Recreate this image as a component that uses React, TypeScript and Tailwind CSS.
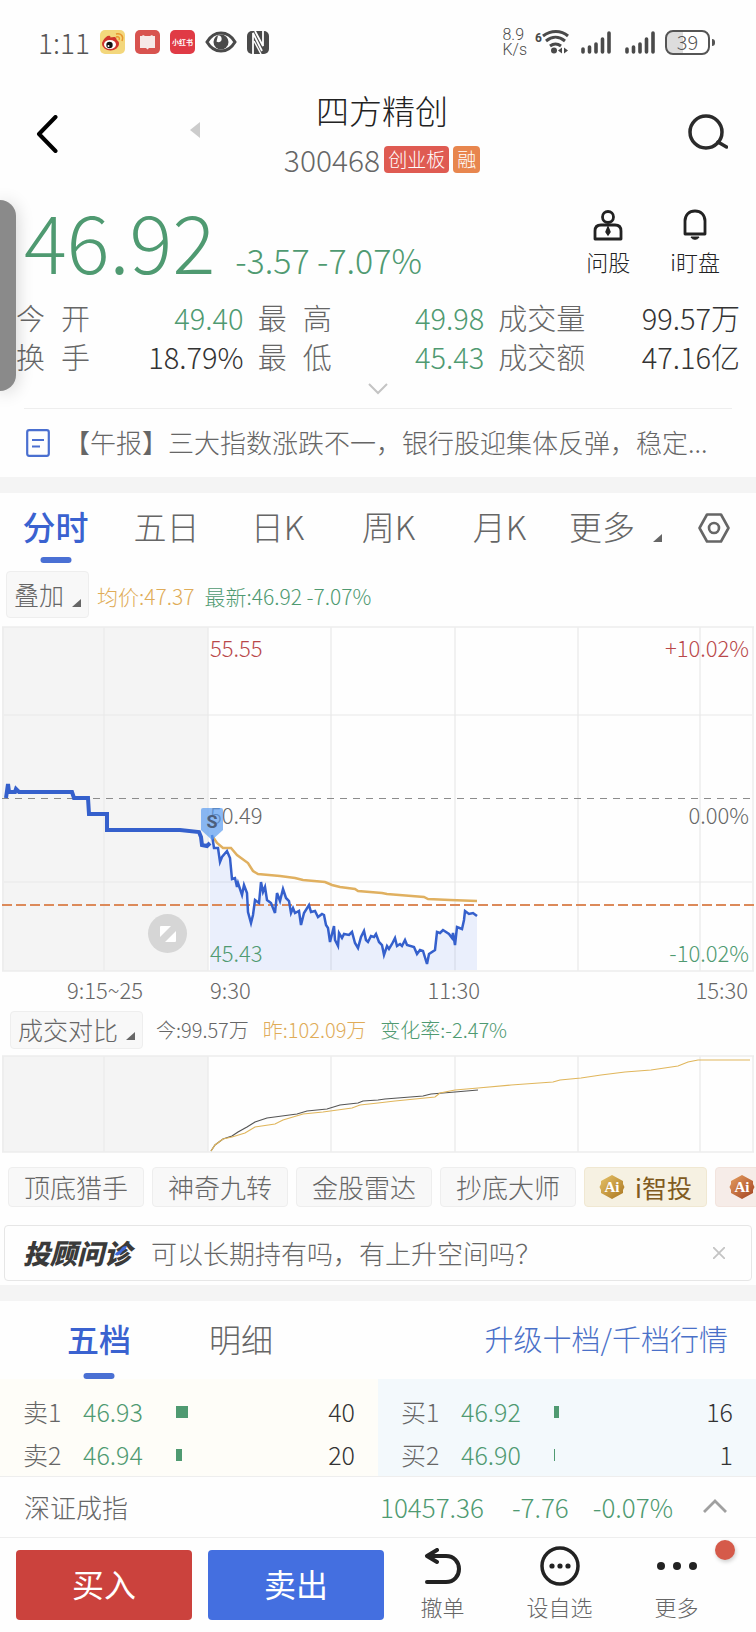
import type { ReactNode } from "react";

const STATS = [
  [
    { label: "今 开", value: "49.40", tone: "text-[#4f9a71]" },
    { label: "最 高", value: "49.98", tone: "text-[#4f9a71]" },
    { label: "成交量", value: "99.57万", tone: "text-[#333333]" },
  ],
  [
    { label: "换 手", value: "18.79%", tone: "text-[#333333]" },
    { label: "最 低", value: "45.43", tone: "text-[#4f9a71]" },
    { label: "成交额", value: "47.16亿", tone: "text-[#333333]" },
  ],
];

const PERIODS = [
  { label: "分时", active: true },
  { label: "五日" },
  { label: "日K" },
  { label: "周K" },
  { label: "月K" },
];

const TOOLS = ["顶底猎手", "神奇九转", "金股雷达", "抄底大师"];

const ASKS = [
  { label: "卖1", price: "46.93", volume: 40 },
  { label: "卖2", price: "46.94", volume: 20 },
];

const BIDS = [
  { label: "买1", price: "46.92", volume: 16 },
  { label: "买2", price: "46.90", volume: 1 },
];

const GRID_X = [3, 104, 208, 331, 455, 578, 700, 753];

const AUCTION =
  "6,172 8,158 9,166 15,166 16,163 19,166 72,166 74,172 88,172 89,188 107,188 107,204 180,204 199,206 201,211 202,219 207,220 210,217";

const PRICE =
  "212,209 214,222 218,222 220,236 222,231 227,225 230,232 232,253 235,252 237,261 238,257 242,269 244,259 247,267 248,286 251,297 253,289 255,274 259,277 261,256 263,266 265,261 267,274 271,277 275,287 277,267 280,275 283,263 286,272 289,275 291,287 293,282 295,287 299,285 301,299 304,287 309,279 311,286 315,285 318,291 322,288 324,289 326,299 328,302 330,316 334,300 335,314 338,320 339,307 342,312 344,308 349,309 352,306 355,317 358,322 361,311 364,305 366,314 368,316 371,310 374,311 376,308 379,316 382,319 384,329 387,320 389,323 392,318 395,312 397,320 400,318 402,320 405,314 407,319 414,321 417,328 420,324 423,325 427,338 429,328 435,324 437,306 440,307 443,304 449,308 452,312 453,307 455,319 457,301 462,303 464,294 465,285 469,288 473,287 477,290";

const AVERAGE =
  "213,211 217,217 223,222 231,222 237,229 248,237 253,245 258,248 280,250 295,252 303,254 325,256 332,259 340,261 355,263 358,265 382,267 387,268 424,271 428,273 450,274 477,275";

const VOLUME_YESTERDAY =
  "211,96 215,90 223,84 232,82 245,78 255,72 275,69 283,65 293,62 303,59 323,57 352,53 360,50 378,48 395,46 435,42 440,38 455,35 478,33 511,30 553,27 560,25 581,23 601,20 625,17 651,15 678,11 688,7 698,5 750,5";

const VOLUME_TODAY =
  "211,96 215,90 223,84 232,81 238,77 247,72 255,67 267,63 297,59 307,56 327,54 340,50 358,48 363,46 378,45 385,44 423,41 431,39 455,37 478,35";

function Corner() {
  return (
    <svg viewBox="0 0 9 8" className="h-2 w-[9px]" fill="#666666" aria-hidden="true">
      <path d="M9 0v8H0z" />
    </svg>
  );
}

function Signal() {
  return (
    <svg viewBox="0 0 30 23" className="h-[23px] w-[30px]" stroke="#4a4a4a" strokeWidth="3.6" strokeLinecap="round" aria-hidden="true">
      <path d="M2 18v3M8.500 16v5M15 13v8M21.500 8v13M28 2v19" />
    </svg>
  );
}

function AiBadge({ from, to, id }: { from: string; to: string; id: string }) {
  return (
    <svg viewBox="0 0 26 26" className="size-[26px] shrink-0" aria-hidden="true">
      <defs>
        <linearGradient id={id} x1="0" y1="0" x2="1" y2="1">
          <stop offset="0" stopColor={from} />
          <stop offset="1" stopColor={to} />
        </linearGradient>
      </defs>
      <path d="M13 1 24 7v3l1.500 3-1.500 3v3l-11 6-11-6v-3L.5 13 2 10V7z" fill={`url(#${id})`} />
      <text x="13" y="18" textAnchor="middle" fontSize="15" fontWeight="700" fontFamily="Liberation Serif, serif" fill="#ffffff">Ai</text>
    </svg>
  );
}

function StatusBar() {
  return (
    <div className="flex h-[84px] items-center justify-between pr-[41px] pl-[38px]">
      <div className="flex items-center gap-[10px]">
        <span className="text-[28px] text-[#555555]">1:11</span>
        <svg viewBox="0 0 25 24" className="h-6 w-[25px]" aria-hidden="true">
          <rect width="25" height="24" rx="5" fill="#f3d77c" />
          <ellipse cx="10.500" cy="14" rx="8.500" ry="6.500" fill="#d0342c" />
          <path d="M3 11c2-4 5-6 7-5 1 1 0 2 0 2s5-2 6 0c1 1 0 2 0 2z" fill="#d0342c" />
          <ellipse cx="10" cy="14.500" rx="6" ry="4.500" fill="#ffffff" />
          <circle cx="9.500" cy="15" r="3.200" fill="#111111" />
          <circle cx="8.500" cy="16" r="1" fill="#ffffff" />
          <path d="M16 7c3-1 4 1 3 3M16 4c5-1 8 2 6 7" fill="none" stroke="#e8962c" strokeWidth="1.500" />
        </svg>
        <svg viewBox="0 0 25 24" className="h-6 w-[25px]" aria-hidden="true">
          <rect width="25" height="24" rx="5" fill="#d8534f" />
          <path d="M5 6h2l1-1 2 1h5l2-1 1 1h2v12h-6l-1.500 1.500L11 18H5z" fill="#f6e9e8" />
        </svg>
        <span className="flex h-6 w-[25px] items-center justify-center rounded-[5px] bg-[#e03a45] text-[7px] font-bold whitespace-nowrap text-white">小红书</span>
        <svg viewBox="0 0 32 22" className="h-[22px] w-8" aria-hidden="true">
          <path d="M2 11C9-1 23-1 30 11 23 23 9 23 2 11z" fill="none" stroke="#4a4a4a" strokeWidth="3" />
          <circle cx="16" cy="11" r="7.500" fill="#4a4a4a" />
          <path d="M13 4.500c3 0 4 2 3.500 4.500-.5 2-3 3-5 1.500z" fill="#ffffff" />
        </svg>
        <svg viewBox="0 0 22 23" className="h-[23px] w-[22px]" aria-hidden="true">
          <rect width="22" height="23" rx="5" fill="#4a4a4a" />
          <path d="M6 23V2l9 18M8 0l8 15V0" fill="none" stroke="#ffffff" strokeWidth="1.800" />
          <path d="m7 10 7 13" fill="none" stroke="#ffffff" strokeWidth="1.500" />
        </svg>
      </div>
      <div className="flex items-center">
        <div className="font-[Roboto,sans-serif] text-[16px] leading-[15px] text-[#4a4a4a]">
          8.9
          <br />
          K/s
        </div>
        <svg viewBox="0 0 36 26" className="ml-2 h-[26px] w-9" aria-hidden="true">
          <text x="0" y="13" fontSize="12" fontWeight="700" fontFamily="Roboto, sans-serif" fill="#4a4a4a">6</text>
          <path d="M8 7c8-6 18-6 25 0M11 12c6-5 13-5 19 0M15 17c4-3 7-3 11 0" fill="none" stroke="#4a4a4a" strokeWidth="3" />
          <circle cx="19" cy="21.500" r="3" fill="#4a4a4a" />
          <path d="m23 21.500 4-3v6zM33 21.500l-4-3v6z" fill="#4a4a4a" />
        </svg>
        <span className="ml-[10px]">
          <Signal />
        </span>
        <span className="ml-[14px]">
          <Signal />
        </span>
        <span className="ml-[10px] flex h-[25px] w-[45px] items-center justify-center rounded-[8px] border-2 border-[#555555] bg-linear-to-r from-[#dddddd] from-40% to-white to-40% text-[20px] text-[#555555]">39</span>
        <span className="ml-[2px] h-[7px] w-[3px] rounded-r-sm bg-[#555555]" />
      </div>
    </div>
  );
}

function Header() {
  return (
    <header className="flex h-[100px] items-center justify-between pr-[28px] pl-[36px]">
      <div className="flex flex-1 items-center">
        <button type="button" aria-label="返回">
          <svg viewBox="0 0 22 38" className="h-[38px] w-[22px]" fill="none" stroke="#000000" strokeWidth="4" strokeLinecap="round" strokeLinejoin="round">
            <path d="M19.500 2 3 19l16.500 17" />
          </svg>
        </button>
        <button type="button" aria-label="上一只" className="mb-2 ml-[132px]">
          <svg viewBox="0 0 10 16" className="h-4 w-[10px]" fill="#cccccc">
            <path d="M10 0v16L0 8z" />
          </svg>
        </button>
      </div>
      <div className="flex flex-col items-center">
        <h1 className="text-[33px] leading-[50px] font-light text-[#222222]">四方精创</h1>
        <div className="flex h-12 items-center gap-1">
          <span className="text-[30px] text-[#666666]">300468</span>
          <span className="flex h-[27px] items-center rounded-[4px] bg-[#df5b52] px-[4px] text-[19px] text-white">创业板</span>
          <span className="flex h-[27px] items-center rounded-[4px] bg-[#e8864e] px-[4px] text-[19px] text-white">融</span>
        </div>
      </div>
      <div className="flex flex-1 justify-end pb-1">
        <button type="button" aria-label="搜索">
          <svg viewBox="0 0 40 36" className="h-9 w-10" fill="none" stroke="#2b2b2b" strokeWidth="3.500">
            <circle cx="18" cy="18" r="16" />
            <path d="m30 28 8.500 5" strokeLinecap="round" />
          </svg>
        </button>
      </div>
    </header>
  );
}

function Quote() {
  return (
    <section className="flex h-[114px] justify-between pr-[36px] pl-6">
      <div className="flex items-baseline gap-5 text-[#4f9a71]">
        <strong className="text-[80px] leading-[110px] font-light">46.92</strong>
        <span className="text-[34px]">-3.57 -7.07%</span>
      </div>
      <div className="flex gap-[40px] pt-[25px] text-[22px] leading-[40px] text-[#222222]">
        <button type="button" className="flex flex-col items-center">
          <svg viewBox="0 0 30 32" className="h-8 w-[30px]" fill="none" stroke="#222222" strokeWidth="2.800" aria-hidden="true">
            <circle cx="15" cy="8" r="5.500" />
            <path d="M2 30v-8c0-4 2-6 6-6h14c4 0 6 2 6 6v8z" strokeLinejoin="round" />
            <path d="m15 18 2 5-2 3-2-3z" fill="#222222" strokeWidth="1.500" />
          </svg>
          问股
        </button>
        <button type="button" className="flex flex-col items-center">
          <svg viewBox="0 0 24 32" className="h-8 w-6" fill="none" stroke="#222222" strokeWidth="2.800" aria-hidden="true">
            <path d="M2 25V12C2 6 6 2 12 2s10 4 10 10v13z" strokeLinejoin="round" />
            <path d="M8 28h8c-1 3-7 3-8 0z" fill="#222222" strokeWidth="1" />
          </svg>
          i盯盘
        </button>
      </div>
    </section>
  );
}

function Stats() {
  return (
    <section className="-mt-[2px]">
      {STATS.map((row) => (
        <dl key={row[0].label} className="grid h-[39px] grid-cols-[227fr_226fr_241fr] items-center gap-x-[14px] pr-[16px] pl-[16px] text-[29px]">
          {row.map((item) => (
            <div key={item.label} className="flex justify-between">
              <dt className={item.label[1] === " " ? "flex w-[74px] justify-between text-[#666666]" : "text-[#666666]"}>
                {item.label[1] === " " ? (
                  <>
                    <span>{item.label[0]}</span>
                    <span>{item.label[2]}</span>
                  </>
                ) : (
                  item.label
                )}
              </dt>
              <dd className={item.tone}>{item.value}</dd>
            </div>
          ))}
        </dl>
      ))}
      <button type="button" aria-label="展开" className="flex h-[34px] w-full items-center justify-center pb-1">
        <svg viewBox="0 0 20 12" className="h-3 w-5" fill="none" stroke="#c4c4c4" strokeWidth="2">
          <path d="m1 1 9 9 9-9" />
        </svg>
      </button>
    </section>
  );
}

function News() {
  return (
    <a href="#news" className="mx-6 flex h-[69px] items-center border-t border-[#eeeeee] pl-[2px]">
      <svg viewBox="0 0 24 28" className="h-7 w-6 shrink-0" fill="none" stroke="#4a6fd0" strokeWidth="2.200" aria-hidden="true">
        <rect x="1.200" y="1.200" width="21.600" height="25.600" rx="2" />
        <path d="M6 11h12M6 17.500h8" />
      </svg>
      <span className="ml-[14px] flex-1 truncate pr-[10px] pb-1 text-[26px] text-[#666666]">【午报】三大指数涨跌不一，银行股迎集体反弹，稳定...</span>
    </a>
  );
}

function PeriodTabs() {
  return (
    <nav className="flex h-[70px] pr-[26px] text-[33px] leading-[66px] text-[#666666]">
      {PERIODS.map((tab) => (
        <button key={tab.label} type="button" className={tab.active ? "relative h-full w-[111px] pb-1 font-medium text-[#3a62d0]" : "h-full w-[111px] pb-1"}>
          {tab.label}
          {tab.active ? <span className="absolute bottom-0 left-1/2 h-[6px] w-[31px] -translate-x-1/2 rounded-full bg-[#4a70d4]" /> : null}
        </button>
      ))}
      <button type="button" className="ml-[14px] flex h-full items-center gap-[18px] pb-1">
        更多
        <span className="mt-6">
          <Corner />
        </span>
      </button>
      <button type="button" aria-label="设置" className="ml-auto">
        <svg viewBox="0 0 32 30" className="h-[30px] w-8" fill="none" stroke="#666666" strokeWidth="2.600">
          <path d="M9 1.500h14L30.500 15 23 28.500H9L1.500 15z" strokeLinejoin="round" />
          <circle cx="16" cy="15" r="5" />
        </svg>
      </button>
    </nav>
  );
}

function Grid({ height, edges, rows }: { height: number; edges: number[]; rows: number[] }) {
  return (
    <>
      <rect x="2" y="1" width="206" height={height - 2} fill="#f4f4f4" />
      <g stroke="#ececec" strokeWidth="1.500">
        {GRID_X.map((x) => (
          <path key={x} d={`M${x} 1V${height - 1}`} />
        ))}
        {edges.map((y) => (
          <path key={y} d={`M2 ${y}H754`} />
        ))}
      </g>
      <g stroke="#e8e8e8" strokeWidth="1">
        {rows.map((y) => (
          <path key={y} d={`M4 ${y}H752`} />
        ))}
      </g>
    </>
  );
}

function PriceChart() {
  return (
    <section className="mt-2">
      <div className="relative h-[346px] text-[22px] leading-[24px]">
        <svg viewBox="0 0 756 346" preserveAspectRatio="none" className="h-full w-full" fill="none">
          <Grid height={346} edges={[1, 345]} rows={[89, 256]} />
          <polygon points={`${PRICE} 477,344 210,344 210,212`} fill="#4a78f0" fillOpacity="0.110" />
          <path d="M2 172.500H754" stroke="#8c8c8c" strokeWidth="1" strokeDasharray="7 6" />
          <path d="M2 279H756" stroke="#dc8a5a" strokeWidth="2" strokeDasharray="10 4" />
          <polyline points={AUCTION} stroke="#3560cc" strokeWidth="4" />
          <polyline points={AVERAGE} stroke="#e0b060" strokeWidth="2.500" />
          <polyline points={PRICE} stroke="#3560cc" strokeWidth="2.500" />
        </svg>
        <span className="absolute top-[9px] left-[210px] text-[#b9484a]">55.55</span>
        <span className="absolute top-[9px] right-[7px] text-[#b9484a]">+10.02%</span>
        <span className="absolute top-[176px] left-[210px] text-[#666666]">50.49</span>
        <span className="absolute top-[176px] right-[7px] text-[#666666]">0.00%</span>
        <span className="absolute top-[314px] left-[210px] text-[#4f9a71]">45.43</span>
        <span className="absolute top-[314px] right-[7px] text-[#4f9a71]">-10.02%</span>
        <svg viewBox="0 0 22 32" className="absolute top-[182px] left-[201px] h-8 w-[22px]" aria-hidden="true">
          <path d="M0 2q0-2 2-2h18q2 0 2 2v20L11 32 0 22z" fill="#5a9bf0" fillOpacity="0.700" />
          <text x="11" y="20" textAnchor="middle" fontSize="18" fontWeight="700" fontFamily="Roboto, sans-serif" fill="#4d5f7c">S</text>
        </svg>
        <button type="button" aria-label="全屏" className="absolute top-[288px] left-[148px] flex size-[39px] items-center justify-center rounded-full bg-[#d6d6d6]">
          <svg viewBox="0 0 16 16" className="size-4" fill="#ffffff">
            <path d="M0 1q0-1 1-1h10L0 11zM16 15q0 1-1 1H5L16 5z" />
          </svg>
        </button>
      </div>
      <div className="grid h-9 grid-cols-[210fr_270fr_276fr] items-center pb-[2px] text-[22px] text-[#666666]">
        <span className="text-center">9:15~25</span>
        <span className="flex justify-between">
          <span>9:30</span>
          <span>11:30</span>
        </span>
        <span className="pr-2 text-right">15:30</span>
      </div>
    </section>
  );
}

function VolumeChart() {
  return (
    <section>
      <div className="mt-[3px] flex h-[38px] items-center pl-[10px] text-[20px]">
        <button type="button" className="flex h-full items-center gap-2 rounded-[4px] border border-[#eeeeee] bg-[#f8f8f8] px-[7px] text-[25px] text-[#666666]">
          成交对比
          <span className="mt-3">
            <Corner />
          </span>
        </button>
        <span className="ml-[13px] text-[#666666]">今:99.57万</span>
        <span className="ml-[14px] text-[#e0ac58]">昨:102.09万</span>
        <span className="ml-[14px] text-[#4f9a71]">变化率:-2.47%</span>
      </div>
      <svg viewBox="0 0 756 98" preserveAspectRatio="none" className="mt-[6px] h-[98px] w-full" fill="none">
        <Grid height={98} edges={[1, 97]} rows={[]} />
        <polyline points={VOLUME_TODAY} stroke="#555555" strokeWidth="1.200" />
        <polyline points={VOLUME_YESTERDAY} stroke="#e0b65c" strokeWidth="1.200" />
      </svg>
    </section>
  );
}

function Tools() {
  return (
    <div className="mt-[14px] flex gap-2 overflow-hidden pl-2 text-[26px] whitespace-nowrap text-[#666666]">
      {TOOLS.map((tool) => (
        <button key={tool} type="button" className="h-10 w-[136px] shrink-0 rounded-[4px] border border-[#eeeeee] bg-[#f8f8f8] leading-[36px]">
          {tool}
        </button>
      ))}
      <button type="button" className="flex h-10 w-[123px] shrink-0 items-center justify-center gap-[10px] rounded-[4px] border border-[#f0e8d2] bg-[#f6f1e2] text-[25px] leading-[36px] font-normal text-[#805a20]">
        <AiBadge id="ai-gold" from="#e8c468" to="#a87420" />
        i智投
      </button>
      <button type="button" aria-label="Ai" className="flex h-10 w-[123px] shrink-0 items-center rounded-[4px] border border-[#f2e4de] bg-[#f6ece8] pl-[13px]">
        <AiBadge id="ai-copper" from="#e8a060" to="#a04020" />
      </button>
    </div>
  );
}

function AdvisorBar() {
  return (
    <div className="mx-1 mt-[18px] flex h-14 items-center rounded-[4px] border border-[#e6e6e6] pr-[26px] pl-[18px]">
      <span className="relative text-[27px] font-black text-[#3a3a3a] italic">
        投顾问诊
        <svg viewBox="0 0 12 10" className="absolute top-[13px] right-[4px] h-[10px] w-3" fill="#3f68d8" aria-hidden="true">
          <path d="M0 9c1-4 4-3 6-6 1-2 3-3 6-3-1 4-3 4-5 6C5 9 3 10 0 9z" />
        </svg>
      </span>
      <a href="#ask" className="ml-5 flex-1 pb-[2px] text-[26px] text-[#666666]">可以长期持有吗，有上升空间吗？</a>
      <button type="button" aria-label="关闭">
        <svg viewBox="0 0 12 12" className="size-3" stroke="#c4c4c4" strokeWidth="1.800">
          <path d="m0 0 12 12M12 0 0 12" />
        </svg>
      </button>
    </div>
  );
}

function BookSide({ rows, name, tone }: { rows: typeof ASKS; name: string; tone: string }) {
  return (
    <div className={tone}>
      <table aria-label={name} className="w-full table-fixed text-[25px]">
        <tbody>
          {rows.map((row) => (
            <tr key={row.label} className="h-[43px]">
              <th scope="row" className="w-[60px] p-0 text-left font-light text-[#666666]">{row.label}</th>
              <td className="w-[93px] p-0 text-[#4f9a71]">{row.price}</td>
              <td className="p-0">
                <span className="block h-3 bg-[#4f9a71]" style={{ width: Math.max(1, Math.round(row.volume * 0.3)) }} />
              </td>
              <td className="w-[80px] p-0 text-right text-[#333333]">{row.volume}</td>
            </tr>
          ))}
        </tbody>
      </table>
    </div>
  );
}

function OrderBook() {
  return (
    <section>
      <div className="flex h-[78px] pr-[28px] pl-[67px] text-[32px] leading-[74px] text-[#666666]">
        <button type="button" className="relative h-full pb-1 font-medium text-[#3a62d0]">
          五档
          <span className="absolute bottom-0 left-1/2 h-[6px] w-[31px] -translate-x-1/2 rounded-full bg-[#4a70d4]" />
        </button>
        <button type="button" className="ml-[78px] h-full pb-1">明细</button>
        <a href="#level2" className="ml-auto text-[29px] text-[#4a70c8]">升级十档/千档行情</a>
      </div>
      <div className="grid grid-cols-2">
        <BookSide rows={ASKS} name="卖盘" tone="bg-[#fefdf8] pt-[11px] pr-[23px] pl-[23px]" />
        <BookSide rows={BIDS} name="买盘" tone="bg-[#f3f9fc] pt-[11px] pr-[23px] pl-[23px]" />
      </div>
    </section>
  );
}

function IndexBar() {
  return (
    <div className="flex h-[61px] items-center border-t border-[#eeeeee] pr-[29px] pb-[2px] pl-6 text-[26px] text-[#4f9a71]">
      <span className="mr-auto text-[#666666]">深证成指</span>
      <span>10457.36</span>
      <span className="ml-7">-7.76</span>
      <span className="ml-6">-0.07%</span>
      <button type="button" aria-label="展开指数" className="ml-[30px]">
        <svg viewBox="0 0 24 14" className="h-[14px] w-6" fill="none" stroke="#a0a0a0" strokeWidth="2.800">
          <path d="m1 13 11-11 11 11" />
        </svg>
      </button>
    </div>
  );
}

function Action({ label, children }: { label: string; children: ReactNode }) {
  return (
    <button type="button" className="relative flex flex-1 flex-col items-center">
      <span className="flex h-10 items-center">{children}</span>
      <span className="text-[22px] leading-[40px] text-[#666666]">{label}</span>
    </button>
  );
}

function BottomBar() {
  return (
    <footer className="flex h-[95px] border-t border-[#eeeeee] pr-[21px] pl-4">
      <button type="button" className="mt-3 h-[70px] w-[176px] rounded-[4px] bg-[#cb423d] pb-1 text-[32px] font-normal text-white">买入</button>
      <button type="button" className="mt-3 ml-4 h-[70px] w-[176px] rounded-[4px] bg-[#446fe0] pb-1 text-[32px] font-normal text-white">卖出</button>
      <div className="flex flex-1 pt-[8px]">
        <Action label="撤单">
          <svg viewBox="0 0 38 36" className="h-9 w-[38px]" fill="none" stroke="#222222" strokeWidth="4" strokeLinecap="round" strokeLinejoin="round" aria-hidden="true">
            <path d="M13 2 3 8l10 6M3 8h19c8 0 13 6 13 13s-5 13-13 13H3" />
          </svg>
        </Action>
        <Action label="设自选">
          <svg viewBox="0 0 40 40" className="size-10" fill="#222222" aria-hidden="true">
            <circle cx="20" cy="20" r="18" fill="none" stroke="#222222" strokeWidth="3.500" />
            <circle cx="12" cy="20" r="2.600" />
            <circle cx="20" cy="20" r="2.600" />
            <circle cx="28" cy="20" r="2.600" />
          </svg>
        </Action>
        <Action label="更多">
          <svg viewBox="0 0 40 8" className="h-2 w-10" fill="#222222" aria-hidden="true">
            <circle cx="4" cy="4" r="4" />
            <circle cx="20" cy="4" r="4" />
            <circle cx="36" cy="4" r="4" />
          </svg>
          <span className="absolute -top-[6px] right-0 size-5 rounded-full bg-[#d55a4a] shadow-[1px_2px_4px_rgba(0,0,0,0.2)]" />
        </Action>
      </div>
    </footer>
  );
}

export default function App() {
  return (
    <main className="relative overflow-hidden bg-[#fefefe] font-['Noto_Sans_CJK_SC',sans-serif] font-light">
      <StatusBar />
      <Header />
      <Quote />
      <Stats />
      <News />
      <div className="h-4 bg-[#f4f4f4]" />
      <PeriodTabs />
      <div className="mt-2 flex h-[47px] items-center pl-[6px] text-[21px]">
        <button type="button" className="flex h-full items-center gap-2 rounded-[4px] border border-[#eeeeee] bg-[#f8f8f8] px-[7px] text-[25px] text-[#666666]">
          叠加
          <span className="mt-4">
            <Corner />
          </span>
        </button>
        <span className="mt-1 ml-2 text-[#e0ac58]">均价:47.37</span>
        <span className="mt-1 ml-[10px] text-[#4f9a71]">最新:46.92 -7.07%</span>
      </div>
      <PriceChart />
      <VolumeChart />
      <Tools />
      <AdvisorBar />
      <div className="mt-1 h-4 bg-[#f4f4f4]" />
      <OrderBook />
      <IndexBar />
      <BottomBar />
      {/* floating edge handle */}
      <div className="absolute top-[200px] left-0 h-[191px] w-4 rounded-r-[16px] bg-[#8a8a8a] shadow-[0_2px_18px_rgba(0,0,0,0.2)]" />
    </main>
  );
}
